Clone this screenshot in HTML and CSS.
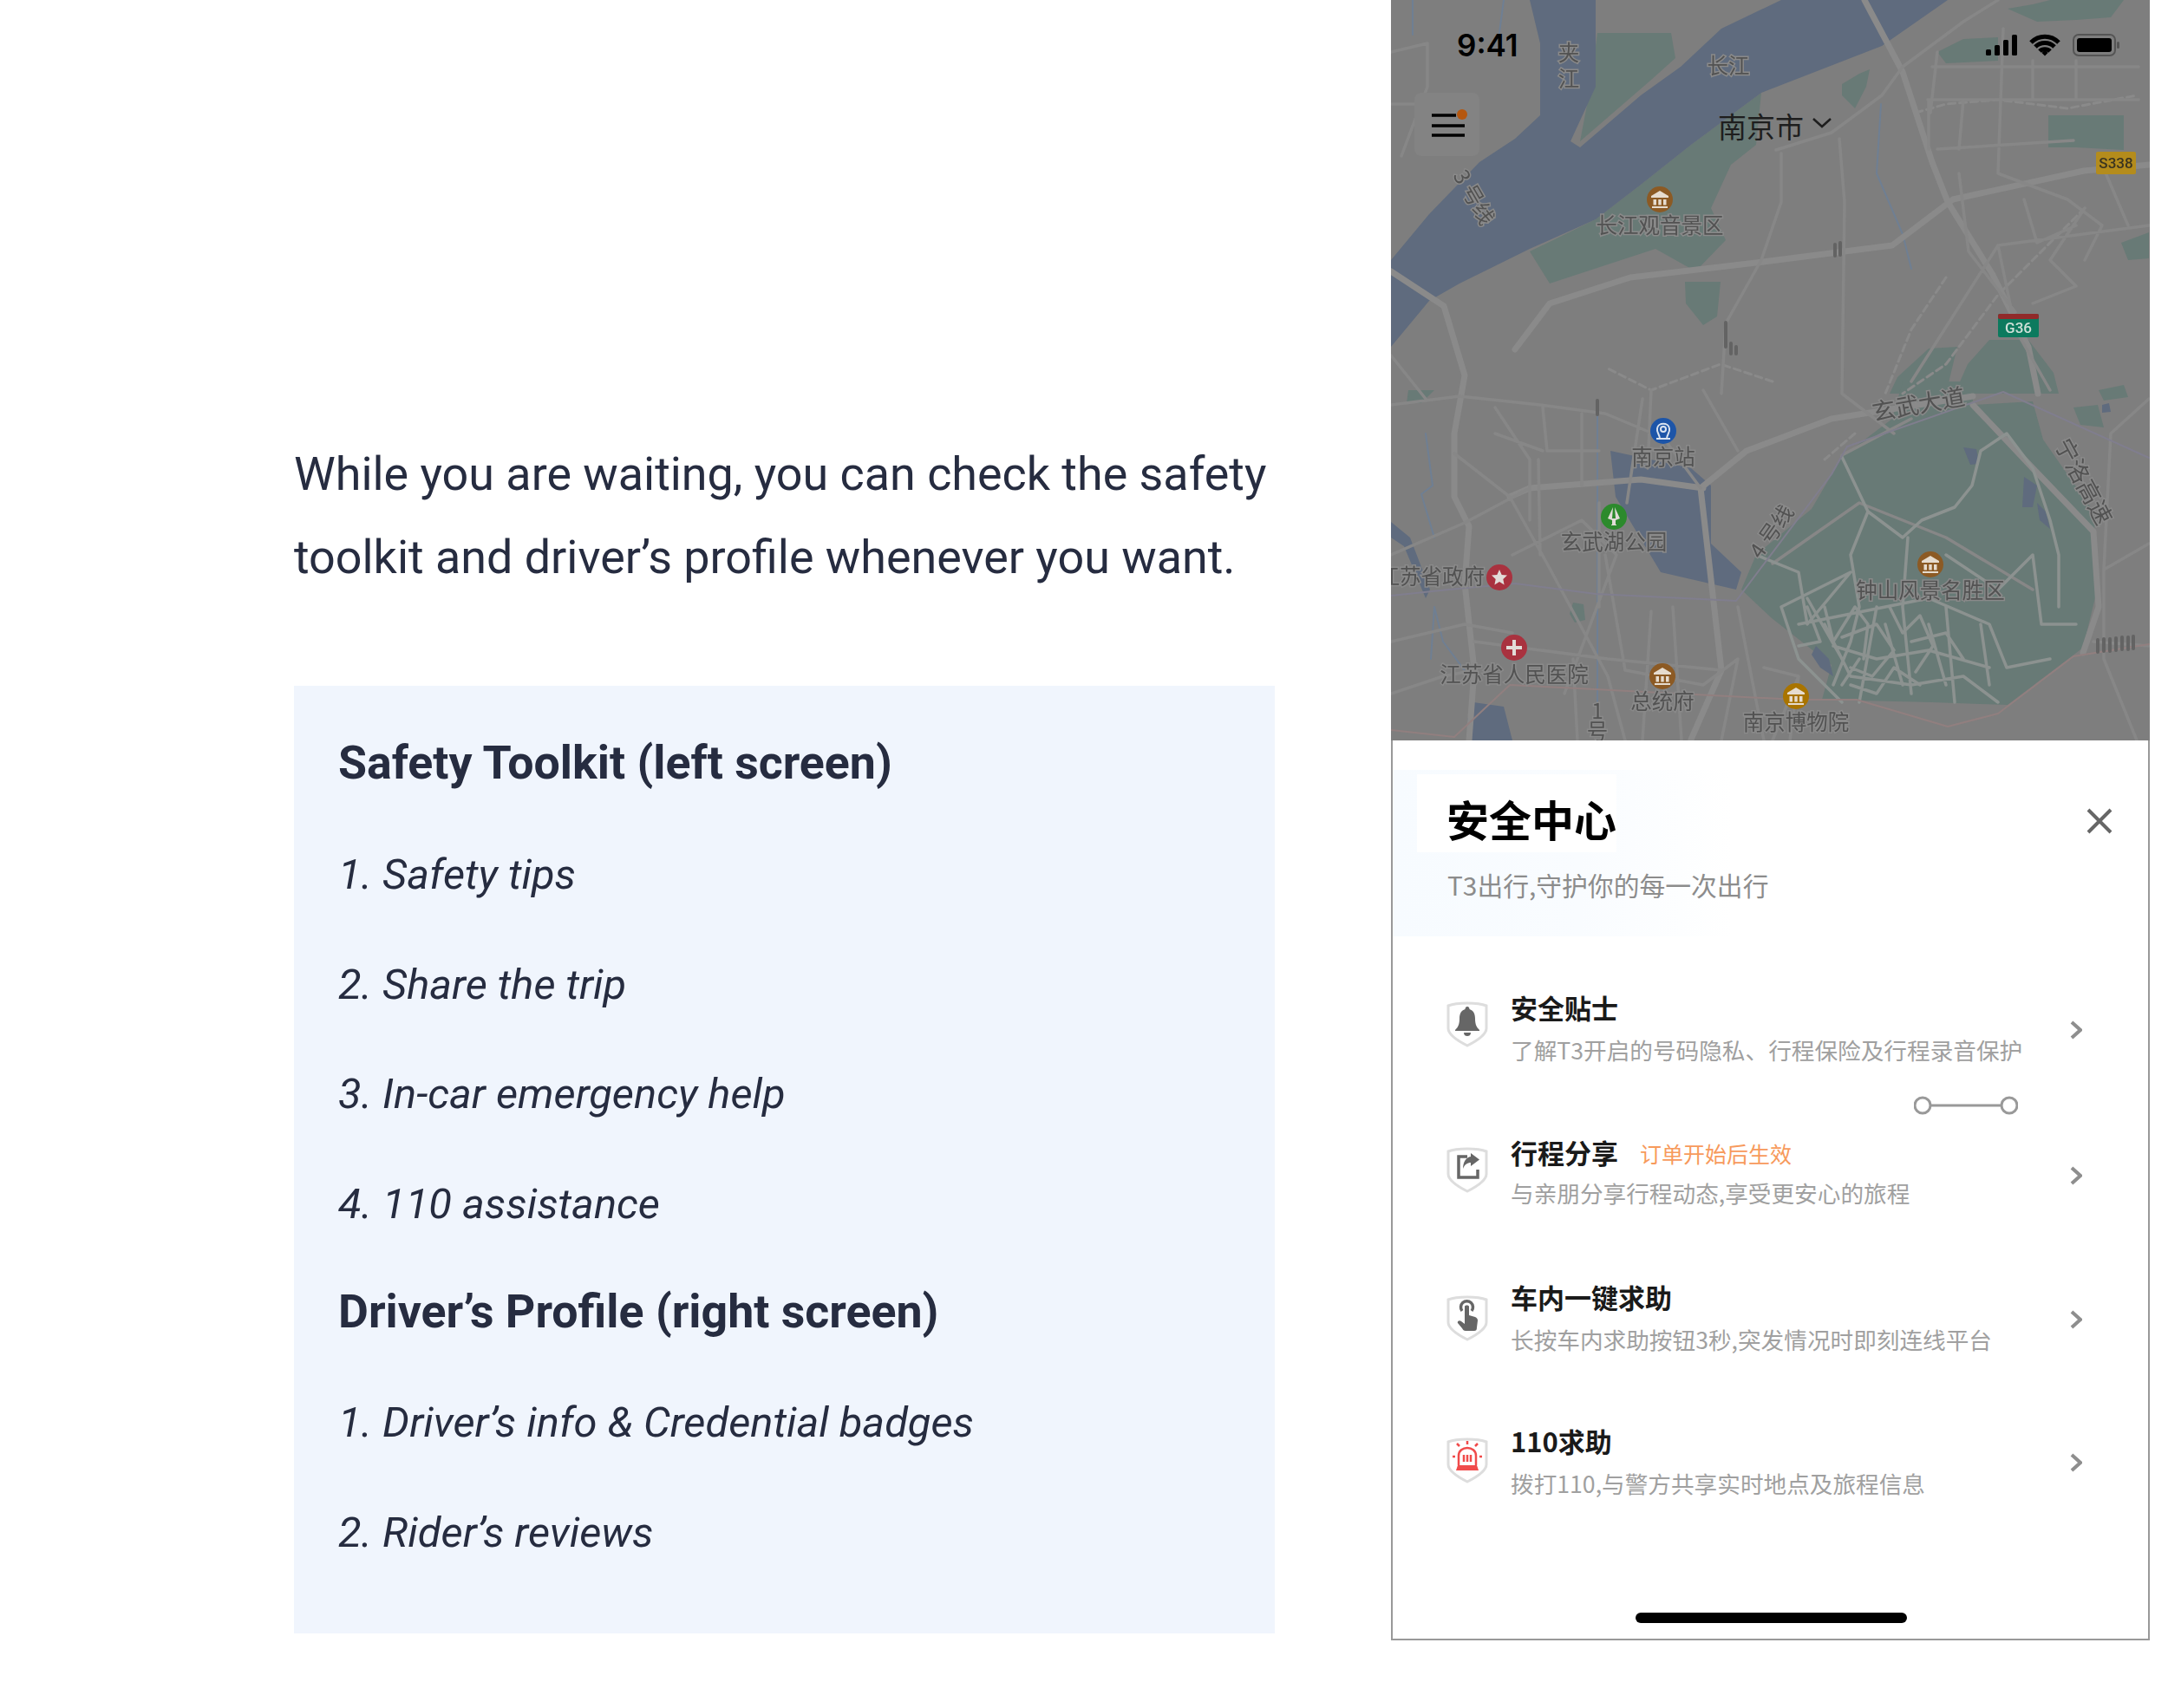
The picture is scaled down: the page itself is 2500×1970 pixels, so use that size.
FILE: index.html
```html
<!DOCTYPE html>
<html lang="en">
<head>
<meta charset="utf-8">
<title>Safety toolkit</title>
<link rel="stylesheet" href="styles.css">
</head>
<body>
<main class="page">
  <section class="copy">
    <p class="intro">While you are waiting, you can check the safety toolkit and driver’s profile whenever you want.</p>
    <div class="panel">
      <h2 class="panel-h">Safety Toolkit (left screen)</h2>
      <p class="panel-i">1. Safety tips</p>
      <p class="panel-i">2. Share the trip</p>
      <p class="panel-i">3. In-car emergency help</p>
      <p class="panel-i">4. 110 assistance</p>
      <h2 class="panel-h panel-h-second">Driver’s Profile (right screen)</h2>
      <p class="panel-i">1. Driver’s info &amp; Credential badges</p>
      <p class="panel-i">2. Rider’s reviews</p>
    </div>
  </section>

  <section class="phone">
    <div class="map">
      <svg class="map-art" viewBox="0 0 875 854" width="875" height="854" xmlns="http://www.w3.org/2000/svg">
        <defs>
          <g id="museum">
            <path d="M-10-4L0-10L10-4V-2H-10Z M-9 8H9V10H-9Z M-7.500 0H-4V6.500H-7.500Z M-1.700 0H1.700V6.500H-1.700Z M4 0H7.500V6.500H4Z" fill="#e6dccf"/>
          </g>
        </defs>
        <rect class="m-land" width="875" height="854"/>
        <!-- green -->
        <path class="m-green" d="M238 38H323L328 67L299 93L218 163L230 100Z"/>
        <path class="m-green" d="M427 107L421 167L392 190L369 240L386 277L357 307L346 310L305 287L183 327L160 290L236 253L288 213L346 167Z"/>
        <path class="m-green" d="M520 97L540 85L552 80L548 100L535 125L520 110Z"/>
        <path class="m-green" d="M339 325H380L376 365L360 375L340 350Z"/>
        <path class="m-green" d="M758 133H845V173L790 170H758Z"/>
        <path class="m-green" d="M711 10L740 5L760 0H845L830 20L790 23L745 25Z"/>
        <path class="m-green" d="M630 60L660 45L700 43V70L640 73Z"/>
        <path class="m-green" d="M665 420L690 392L735 392L764 430L770 454H650Z"/>
        <path class="m-green" d="M584 435L620 402L653 400L640 454H575Z"/>
        <path class="m-green" d="M578 483L590 440H671L671 467L740 463L752 507L810 590L816 673L798 747L711 813L624 810L497 807L508 767L439 713L404 680L421 640L485 587L520 527Z"/>
        <path class="m-green" d="M787 470L815 467L822 493L795 490Z"/>
        <path class="m-green" d="M816 450L845 444L850 458L822 462Z"/>
        <path class="m-green" d="M842 280L874 268V298L850 300Z"/>
        <path class="m-green" d="M20 450H50L35 465H18Z"/>
        <path class="m-green" d="M210 695L222 697L224 715L212 718L206 708Z"/>
        <!-- water -->
        <path class="m-water" d="M160 0L172 50L172 133L143 160L102 187L44 247L0 300V400L44 347L79 327L160 287L236 253L288 213L346 167L427 107L566 53L642 0H450L381 33L334 77L288 110L218 170L207 163L236 100L236 40V0Z"/>
        <path class="m-water" d="M253 520L346 540L369 560L369 627L404 660L398 680L311 660L259 573Z"/>
        <path class="m-water" d="M95 810L130 815L140 854H92L88 830Z"/>
        <path class="m-water" d="M490 745L505 760L510 780L495 770L485 755Z"/>
        <path class="m-water" d="M0 602L22 620L45 680L40 690L15 630L0 620Z"/>
        <path class="m-water" d="M730 550L745 560L740 585L728 585Z"/>
        <path class="m-water" d="M745 580L755 590L760 610L748 600Z"/>
        <path class="m-water" d="M660 516L675 518L678 535L668 536Z"/>
        <path class="m-water" d="M820 467L828 465L830 475L820 476Z"/>
        <!-- lines -->
        <path class="m-blue" d="M40 500L48 560L35 570L50 620M46 760L50 700L60 740L90 780M238 480V820M130 0L122 60M25 0V40M565 120L560 200L590 270L600 310"/>
        <path class="m-rail" d="M605 130L640 120L700 115L780 125L860 110M440 440L380 420L300 450L250 425M535 500L500 530M800 240L700 340L640 420L590 454M640 320L600 380L570 454"/>
        <!-- roads -->
        <path class="m-major" d="M546 0L590 83L624 187L642 233L694 317L735 400L746 454M143 403L183 350L276 320L421 303L578 283L648 230L799 197L874 190M0 313L61 353L85 433L73 500L73 573L90 607L85 673L96 773L90 854M357 563L381 773L346 853M360 563L288 553L160 563L137 573M357 563L410 520L508 483L671 457M671 467L740 540L810 613L816 700L798 753"/>
        <path class="m-road" d="M450 177V233L427 300L386 373L381 454M517 160L523 233L520 454M444 173L508 153L566 110L590 77L660 25L700 0M624 77H862M619 115H862M706 33L700 200M630 172L787 162M874 260L700 283L600 440M700 283L720 380L760 450M0 467L79 457L172 467L247 477L314 505L357 563M0 640L85 603L160 563M73 523L137 573L180 650L250 780L270 854M247 640L270 773M0 60L42 50V100L12 180M0 120H40M622 130L630 60M655 200L666 290L720 360M820 190L850 260M874 460L830 500L822 657L874 627M822 657V760L860 854M381 773L250 760L96 740M270 773L360 790L400 760L381 854M140 640L220 600L260 640L200 800M170 530L172 640M220 477V560M290 460L272 580M400 520L360 450M0 740L85 720L140 730M520 525L600 483M440 650L540 580L640 620L740 680M0 800L60 780L96 773M520 454L580 500M810 740L874 745M800 240L760 300L790 330L740 350M730 230L745 280L790 260M700 200L780 230L820 260L800 300M0 410L40 460M120 470L160 530V600M175 470L180 520L240 520M175 520L120 500M240 580V700M300 450L296 540M325 700L335 854M300 705L290 854M210 760L215 854M400 700L430 854M430 770L470 780L440 854M470 780L460 854M620 115V172M660 115L655 172M740 70V115M790 70V115"/>
        <path class="m-trail" d="M520 527L550 590L590 620L612 600L650 585L670 560L680 520L710 500L740 540L760 600L770 640L770 700M550 590L530 640L540 700L530 740L510 790M596 620L590 700L600 800M640 640L700 680L740 640L750 720L790 720M421 640L470 660L480 720L530 660L450 700L470 760L520 810M470 720L520 710L570 700L620 690L690 720L710 770L760 760M500 720L530 780L600 790L660 780L700 810M560 700L540 810M640 700L650 810M680 720L690 790M510 745L560 760L620 750L690 770M480 690L520 760M570 720L590 790M620 720L640 790M500 700L510 740L535 700L550 720L545 760M520 735L560 720L580 750L555 780L530 770M575 700L590 730L610 710L625 745L605 775M530 790L560 800L580 770L610 790M480 700L495 740L470 745M540 760L520 790M600 740L640 730L660 760"/>
        <path class="m-purple" d="M0 687L67 680L143 673L236 685L398 693L508 547L526 515L706 452L874 528"/>
        <path class="m-pink" d="M0 842L73 850L137 790L468 807L537 807L642 838L700 823L787 757L874 743"/>
        <!-- dark blobs -->
        <path class="m-stipple" d="M512 282V295M518 280V294M386 372V400M392 396V408M398 400V408M238 462V478M815 738V752M822 737V751M829 737V751M836 736V750M843 735V749M850 735V749M856 734V748"/>
        <!-- labels -->
        <text class="m-label" x="205" y="70" text-anchor="middle">夹</text>
        <text class="m-label" x="205" y="100" text-anchor="middle">江</text>
        <text class="m-label" x="389" y="85" text-anchor="middle">长江</text>
        <text class="m-label" x="0" y="0" text-anchor="middle" transform="translate(88 232) rotate(60)">3 号线</text>
        <text class="m-label" x="310" y="269" text-anchor="middle">长江观音景区</text>
        <text class="m-label m-big" x="0" y="0" text-anchor="middle" transform="translate(610 476) rotate(-10)">玄武大道</text>
        <text class="m-label m-big" x="0" y="0" text-anchor="middle" transform="translate(790 560) rotate(62)">宁洛高速</text>
        <text class="m-label" x="0" y="0" text-anchor="middle" transform="translate(446 618) rotate(-55)">4 号线</text>
        <text class="m-label" x="314" y="536" text-anchor="middle">南京站</text>
        <text class="m-label" x="257" y="634" text-anchor="middle">玄武湖公园</text>
        <text class="m-label" x="108" y="674" text-anchor="end">江苏省政府</text>
        <text class="m-label" x="142" y="787" text-anchor="middle">江苏省人民医院</text>
        <text class="m-label" x="313" y="818" text-anchor="middle">总统府</text>
        <text class="m-label" x="467" y="842" text-anchor="middle">南京博物院</text>
        <text class="m-label" x="622" y="690" text-anchor="middle">钟山风景名胜区</text>
        <text class="m-label" x="238" y="829" text-anchor="middle">1</text>
        <text class="m-label" x="238" y="853" text-anchor="middle">号</text>
        <!-- pins -->
        <g transform="translate(310 230)"><circle class="p-brown" r="15"/><use href="#museum"/></g>
        <g transform="translate(622 651)"><circle class="p-brown" r="15"/><use href="#museum"/></g>
        <g transform="translate(313 780)"><circle class="p-brown" r="15"/><use href="#museum"/></g>
        <g transform="translate(467 803)"><circle class="p-gold" r="15"/><use href="#museum"/></g>
        <g transform="translate(314 497)"><circle class="p-blue" r="15"/><path class="p-stroke" d="M-8 9H8M-4 9C-4 4-8 2-7-3C-6-10 6-10 7-3C8 2 4 4 4 9M-3-2A3 3 0 1 0 3-2A3 3 0 1 0-3-2"/></g>
        <g transform="translate(257 596)"><circle class="p-green" r="15"/><path class="p-fill" d="M-1-11L-7 2L-2 4V9H-3V10H3V9H2V4L7 2L1-11L2 2H-2Z"/></g>
        <g transform="translate(125 666)"><circle class="p-red" r="15"/><path class="p-fill" d="M0-9L2.700-3L9-2.500L4.300 2L5.600 8.500L0 5L-5.600 8.500L-4.300 2L-9-2.500L-2.700-3Z"/></g>
        <g transform="translate(142 747)"><circle class="p-red" r="15"/><path class="p-fill" d="M-2-9H2V-2H9V2H2V9H-2V2H-9V-2H-2Z"/></g>
        <!-- road shields -->
        <g transform="translate(813 175)"><rect class="s-yellow" width="46" height="26" rx="2"/><text class="s-text s-dark" x="23" y="19" text-anchor="middle">S338</text></g>
        <g transform="translate(700 362)"><rect class="s-green" width="47" height="27" rx="2"/><rect class="s-red" width="47" height="6" rx="2"/><text class="s-text s-light" x="23.500" y="22" text-anchor="middle">G36</text></g>
      </svg>

      <div class="status">
        <span class="time">9:41</span>
        <svg class="status-icons" width="155" height="26" viewBox="0 0 155 26" xmlns="http://www.w3.org/2000/svg">
          <rect x="1" y="18" width="6" height="7" rx="1.500"/><rect x="11" y="13" width="6" height="12" rx="1.500"/><rect x="21" y="7" width="6" height="18" rx="1.500"/><rect x="31" y="1" width="6" height="24" rx="1.500"/>
          <path class="wifi" d="M53 10C62 1 76 1 85 10M58 15C64 9 74 9 80 15M63 20C66 17 72 17 75 20"/><path d="M65.500 22L69 18.500L72.500 22L69 25.500Z"/>
          <rect class="batt" x="102" y="1" width="48" height="24" rx="6"/><rect x="106" y="5" width="40" height="16" rx="3"/><rect class="batt-tip" x="152" y="9" width="3" height="8" rx="1.500"/>
        </svg>
      </div>

      <div class="topbar">
        <div class="menu">
          <svg class="menu-ico" width="44" height="36" viewBox="0 0 44 36" xmlns="http://www.w3.org/2000/svg">
            <path class="menu-lines" d="M2 8H30M2 20H40M2 31H40"/><circle class="menu-dot" cx="37" cy="7" r="6"/>
          </svg>
        </div>
        <div class="city">南京市
          <svg width="24" height="12" viewBox="0 0 24 12" xmlns="http://www.w3.org/2000/svg"><path class="city-chev" d="M2 1L12 10L22 1"/></svg>
        </div>
      </div>
    </div>

    <div class="sheet">
      <div class="glow"></div>
      <div class="glow-white"></div>
      <header class="sheet-head">
        <div>
          <h1 class="sheet-title">安全中心</h1>
          <p class="sheet-sub">T3出行,守护你的每一次出行</p>
        </div>
        <svg class="close" width="30" height="30" viewBox="0 0 30 30" xmlns="http://www.w3.org/2000/svg"><path d="M2 2L28 28M28 2L2 28"/></svg>
      </header>

      <div class="list">
        <div class="row row-first">
          <svg class="shield" width="48" height="54" viewBox="0 0 48 54" xmlns="http://www.w3.org/2000/svg">
            <path class="shield-o" d="M2 6C12 2 36 2 46 6V32C46 40 32 48 24 52C16 48 2 40 2 32Z"/>
            <path class="ico" d="M24 7C26 7 26.500 9 26.500 10C31 11.500 33 15 33 21C33 28 35 31 38 34V35H10V34C13 31 15 28 15 21C15 15 17 11.500 21.500 10C21.500 9 22 7 24 7ZM20 37H28C28 40 26 41 24 41C22 41 20 40 20 37Z"/>
          </svg>
          <div class="row-text">
            <div class="row-title">安全贴士</div>
            <div class="row-desc">了解T3开启的号码隐私、行程保险及行程录音保护</div>
          </div>
          <svg class="chev" width="14" height="22" viewBox="0 0 14 22" xmlns="http://www.w3.org/2000/svg"><path d="M2 2L12 11L2 20"/></svg>
        </div>
        <div class="link">
          <svg width="120" height="22" viewBox="0 0 120 22" xmlns="http://www.w3.org/2000/svg"><path d="M20 11H100"/><circle cx="10" cy="11" r="9"/><circle cx="110" cy="11" r="9"/></svg>
        </div>
        <div class="row row-share">
          <svg class="shield" width="48" height="54" viewBox="0 0 48 54" xmlns="http://www.w3.org/2000/svg">
            <path class="shield-o" d="M2 6C12 2 36 2 46 6V32C46 40 32 48 24 52C16 48 2 40 2 32Z"/>
            <path class="ico-line" d="M24 12H14V36H36V27"/><path class="ico" d="M28 8L38 15.500L28 23V19C24 19 21 21 19 26C19 19 22 13 28 12Z"/>
          </svg>
          <div class="row-text">
            <div class="row-title">行程分享<span class="row-tag">订单开始后生效</span></div>
            <div class="row-desc">与亲朋分享行程动态,享受更安心的旅程</div>
          </div>
          <svg class="chev" width="14" height="22" viewBox="0 0 14 22" xmlns="http://www.w3.org/2000/svg"><path d="M2 2L12 11L2 20"/></svg>
        </div>
        <div class="row row-help">
          <svg class="shield" width="48" height="54" viewBox="0 0 48 54" xmlns="http://www.w3.org/2000/svg">
            <path class="shield-o" d="M2 6C12 2 36 2 46 6V32C46 40 32 48 24 52C16 48 2 40 2 32Z"/>
            <path class="ico-line" d="M18 19A7 7 0 1 1 29 19"/><path class="ico" d="M21 14C21 12 26 12 26 14V24L33 26C35 27 36 28 36 30L35 38C35 41 34 42 32 42H22C20 42 19 41 18 39L13 33C12 31 15 29 17 31L21 34Z"/>
          </svg>
          <div class="row-text">
            <div class="row-title">车内一键求助</div>
            <div class="row-desc">长按车内求助按钮3秒,突发情况时即刻连线平台</div>
          </div>
          <svg class="chev" width="14" height="22" viewBox="0 0 14 22" xmlns="http://www.w3.org/2000/svg"><path d="M2 2L12 11L2 20"/></svg>
        </div>
        <div class="row row-police">
          <svg class="shield" width="48" height="54" viewBox="0 0 48 54" xmlns="http://www.w3.org/2000/svg">
            <path class="shield-o" d="M2 6C12 2 36 2 46 6V32C46 40 32 48 24 52C16 48 2 40 2 32Z"/>
            <path class="siren" d="M14 33V22C14 10 34 10 34 22V33M20 21V29M24 21V29M28 21V29M24 5V9M12 8L15 11M36 8L33 11M7 23H10M38 23H41"/><path class="siren-fill" d="M13 33H35L37 39H11Z"/>
          </svg>
          <div class="row-text">
            <div class="row-title">110求助</div>
            <div class="row-desc">拨打110,与警方共享实时地点及旅程信息</div>
          </div>
          <svg class="chev" width="14" height="22" viewBox="0 0 14 22" xmlns="http://www.w3.org/2000/svg"><path d="M2 2L12 11L2 20"/></svg>
        </div>
      </div>
      <div class="home"></div>
    </div>
  </section>
</main>
</body>
</html>
```

FILE: styles.css
```css
* { box-sizing: border-box; }
html, body { margin: 0; padding: 0; background: #fff; }
.page { display: flex; align-items: flex-start; width: 2500px; height: 1970px; overflow: hidden; padding-left: 339px; font-family: Roboto, "Noto Sans CJK SC", sans-serif; }

.copy { width: 1131px; padding-top: 499px; color: #262c40; flex: none; }
.intro { margin: 0 0 100px; font-size: 53.850px; line-height: 96px; }
.panel { height: 1093px; padding: 49px 51px 0; background: #f0f5fd; }
.panel-h { margin: 0; font-size: 53.700px; line-height: 80px; font-weight: 700; }
.panel-i { margin: 0 0 46.500px; font-size: 48.850px; line-height: 80px; font-style: italic; font-weight: 400; }
.panel-h + .panel-i { margin-top: 49px; }
.panel-i:nth-of-type(4) { margin-bottom: 44.500px; }
.panel-h-second + .panel-i { margin-top: 48px; }

.phone { width: 875px; height: 1892px; margin-left: 134px; flex: none; display: flex; flex-direction: column; font-family: "Noto Sans CJK SC", Roboto, sans-serif; }
.map { position: relative; height: 854px; overflow: hidden; flex: none; }
.map-art { position: absolute; left: 0; top: 0; display: block; filter: blur(.6px); }
.m-land { fill: #7e7e7e; }
.m-green { fill: #687a76; }
.m-water { fill: #5f6b7e; }
.m-major, .m-road, .m-trail, .m-blue, .m-rail, .m-purple, .m-pink, .m-stipple { fill: none; stroke-linejoin: round; stroke-linecap: round; }
.m-major { stroke: #8a8a8a; stroke-width: 7; }
.m-road { stroke: #878787; stroke-width: 3.500; }
.m-trail { stroke: #8c9290; stroke-width: 3.500; }
.m-blue { stroke: #6f7f93; stroke-width: 2; }
.m-rail { stroke: #8a8a8a; stroke-width: 3; stroke-dasharray: 8 5; }
.m-purple { stroke: #807e8e; stroke-width: 2; }
.m-pink { stroke: #917f7f; stroke-width: 2; }
.m-stipple { stroke: #636363; stroke-width: 4; }
.m-label { font-size: 24.500px; fill: #525252; stroke: #8a8a8a; stroke-width: 3px; paint-order: stroke; font-family: "Noto Sans CJK SC", sans-serif; }
.m-big { font-size: 27px; }
.p-brown { fill: #8c5a24; }
.p-gold { fill: #a97400; }
.p-blue { fill: #1d55a8; }
.p-green { fill: #2c8a2c; }
.p-red { fill: #a9323f; }
.p-fill { fill: #e2dcd8; }
.p-stroke { fill: none; stroke: #dbe4f0; stroke-width: 2; }
.s-yellow { fill: #b48c1c; }
.s-green { fill: #0c7a5e; }
.s-red { fill: #912a2a; }
.s-text { font-family: Roboto, sans-serif; font-size: 17px; font-weight: 500; }
.s-dark { fill: #3a3420; }
.s-light { fill: #cfe0d8; }

.status { position: relative; display: flex; justify-content: space-between; align-items: center; height: 60px; margin-top: 22px; padding: 0 35px 0 76px; }
.time { font-family: Inter, Roboto, sans-serif; font-size: 35px; font-weight: 600; color: #000; line-height: 60px; }
.status-icons { fill: #000; }
.wifi { fill: none; stroke: #000; stroke-width: 5; }
.batt { fill: none; stroke: #555; stroke-width: 2; }
.batt-tip { fill: #555; }

.topbar { position: relative; height: 72px; margin-top: 25px; }
.menu { position: absolute; left: 27px; top: 0; width: 75px; height: 73px; background: #838383; border-radius: 8px; display: flex; align-items: center; justify-content: center; }
.menu-ico { margin-left: 5px; margin-top: -2px; }
.menu-lines { fill: none; stroke: #000; stroke-width: 3.500; }
.menu-dot { fill: #b5570f; }
.city { position: absolute; left: 377px; top: 15px; display: flex; align-items: center; gap: 9px; font-size: 33px; line-height: 46px; color: #1e1e1e; white-space: nowrap; }
.city svg { margin-top: -6px; }
.city-chev { fill: none; stroke: #1e1e1e; stroke-width: 2.500; }

.sheet { position: relative; flex: 1; display: flex; flex-direction: column; background: #fff; border: 2px solid #999; border-top: 0; }
.glow { position: absolute; left: 0; top: 34px; width: 392px; height: 192px; background: linear-gradient(to right, #f7fbff 0%, #f9fcff 55%, #fff 100%); }
.glow-white { position: absolute; left: 28px; top: 39px; width: 230px; height: 90px; background: #fff; }
.sheet-head { position: relative; display: flex; justify-content: space-between; align-items: flex-start; padding: 60px 41px 0 62px; }
.sheet-title { margin: 0; font-size: 49px; line-height: 60px; font-weight: 700; color: #000; }
.sheet-sub { margin: 26px 0 0 1px; font-size: 29.800px; line-height: 40px; color: #8c8c8c; }
.close { margin-top: 18px; }
.close path { fill: none; stroke: #666; stroke-width: 4; }

.list { position: relative; margin-top: 103px; padding: 0 76px 0 62px; }
.row { display: flex; align-items: flex-start; height: 165px; }
.row-first { height: 121px; }
.row-share { height: 167px; }
.row-help { height: 166px; }
.row-police { height: 166px; }
.shield { flex: none; margin-top: 11px; }
.row-share .shield { margin-top: 12px; }
.row-help .shield { margin-top: 16px; }
.row-police .shield { margin-top: 14px; }
.shield-o { fill: #fff; stroke: #ddd; stroke-width: 3; }
.ico { fill: #666; }
.ico-line { fill: none; stroke: #666; stroke-width: 3.500; }
.siren { fill: none; stroke: #f04b4b; stroke-width: 2.500; }
.siren-fill { fill: #f04b4b; }
.row-text { flex: 1; margin-left: 26px; }
.row-title { font-size: 31px; line-height: 38px; font-weight: 700; color: #1a1a1a; white-space: nowrap; }
.row-tag { margin-left: 25px; font-size: 25px; line-height: 34px; font-weight: 400; color: #f79a5c; position: relative; top: -1px; }
.row-desc { margin-top: 10px; font-size: 26.650px; line-height: 40px; color: #a0a0a0; white-space: nowrap; }
.row-share .row-desc { margin-top: 8px; }
.chev { flex: none; margin-top: 34px; }
.row-share .chev { margin-top: 35px; }
.row-police .chev { margin-top: 33px; }
.chev path { fill: none; stroke: #8e8e8e; stroke-width: 4; }
.link { display: flex; justify-content: flex-end; height: 46px; margin-right: 74px; }
.link svg { display: block; }
.link path { stroke: #999; stroke-width: 3; }
.link circle { fill: #fff; stroke: #999; stroke-width: 3; }
.home { position: absolute; left: 280px; bottom: 18px; width: 313px; height: 12px; border-radius: 6px; background: #000; }
```
